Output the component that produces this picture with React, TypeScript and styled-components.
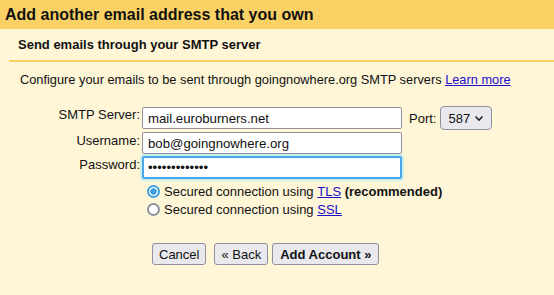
import React from "react";
import styled, { createGlobalStyle } from "styled-components";

const GlobalStyle = createGlobalStyle`
  html, body {
    margin: 0;
    padding: 0;
    background: #fff6d8;
  }
  body {
    font-family: "Liberation Sans", Arial, sans-serif;
    font-size: 13px;
    color: #111;
  }
`;

const Dialog = styled.div`
  width: 554px;
  height: 295px;
  background: #fff6d8;
  overflow: hidden;
`;

const TitleBar = styled.div`
  height: 29px;
  background: #fad165;
  padding-left: 5px;
  font-size: 16px;
  font-weight: bold;
  line-height: 29px;
  color: #111;
`;

const Section = styled.div`
  margin-left: 9px;
  border-bottom: 2px solid #fad165;
  padding: 8px 9px 0;
  height: 23px;
  font-size: 13px;
  font-weight: bold;
  line-height: 15px;
`;

const Intro = styled.p`
  margin: 10px 0 0 20px;
  font-size: 12.8px;
  line-height: 15px;
`;

const Link = styled.a`
  color: #1a0dcc;
  text-decoration: underline;
  cursor: pointer;
`;

const Form = styled.div`
  display: grid;
  grid-template-columns: 122px 260px max-content max-content;
  row-gap: 2px;
  margin: 19px 0 0 20px;
  align-items: center;
`;

const Label = styled.label`
  align-self: start;
  justify-self: end;
  padding: 1px 2px 0 0;
  line-height: 15px;
  white-space: nowrap;
`;

const TextBox = styled.input<{ $focused?: boolean }>`
  box-sizing: border-box;
  width: 260px;
  height: ${(p) => (p.$focused ? "23px" : "22px")};
  margin: 0;
  padding: 0 4px 0 ${(p) => (p.$focused ? "4px" : "5px")};
  font-family: "Liberation Sans", Arial, sans-serif;
  font-size: 13.2px;
  color: #111;
  background: #fff;
  border: ${(p) => (p.$focused ? "2px solid #4aa8e8" : "1px solid #8f8f9d")};
  border-radius: 2px;
  box-shadow: ${(p) => (p.$focused ? "0 0 0 2px #c9f0ec" : "none")};
  outline: none;
`;

const PortLabel = styled.span`
  margin-left: 7px;
  margin-right: 4px;
`;

const SelectWrap = styled.div`
  position: relative;
  width: 52px;
  height: 24px;
`;

const Select = styled.select`
  appearance: none;
  box-sizing: border-box;
  width: 52px;
  height: 24px;
  margin: 0;
  padding: 0 0 0 7px;
  font-family: "Liberation Sans", Arial, sans-serif;
  font-size: 13px;
  color: #111;
  background: #e9e9ed;
  border: 1px solid #8f8f9d;
  border-radius: 4px;
`;

const Chevron = styled.svg`
  position: absolute;
  right: 8px;
  top: 9px;
  pointer-events: none;
`;

const Below = styled.div`
  margin-left: 142px;
`;

const Options = styled.div`
  display: flex;
  flex-direction: column;
  margin-top: 3px;
`;

const OptionRow = styled.label`
  display: flex;
  align-items: center;
  height: 18px;
  white-space: nowrap;
`;

const Radio = styled.input`
  appearance: none;
  box-sizing: border-box;
  width: 13px;
  height: 13px;
  margin: 0 4px 0 5px;
  border-radius: 50%;
  border: 2px solid #8f8f9d;
  background: #fff;

  &:checked {
    border-color: #3d9fe2;
    background: radial-gradient(circle, #3d9fe2 0 3px, #fff 3.5px);
  }
`;

const Buttons = styled.div`
  display: flex;
  gap: 4px;
  margin: 25px 0 0 10px;
`;

const Button = styled.button<{ $primary?: boolean; $spaced?: boolean }>`
  box-sizing: border-box;
  height: 22px;
  margin: 0 ${(p) => (p.$spaced ? "4px" : "0")} 0 0;
  padding: 0 ${(p) => (p.$primary ? "7px" : "6px")};
  font-family: "Liberation Sans", Arial, sans-serif;
  font-size: 13px;
  font-weight: ${(p) => (p.$primary ? "bold" : "normal")};
  color: #111;
  background: #e9e9ed;
  border: 1px solid #8f8f9d;
  border-radius: 3px;
`;

export default function App() {
  return (
    <Dialog>
      <GlobalStyle />
      <TitleBar>Add another email address that you own</TitleBar>
      <Section>Send emails through your SMTP server</Section>
      <Intro>
        Configure your emails to be sent through goingnowhere.org SMTP servers{" "}
        <Link>Learn more</Link>
      </Intro>
      <Form>
        <Label>SMTP Server:</Label>
        <TextBox defaultValue="mail.euroburners.net" />
        <PortLabel>Port:</PortLabel>
        <SelectWrap>
          <Select defaultValue="587">
            <option value="587">587</option>
            <option value="465">465</option>
          </Select>
          <Chevron width="10" height="7" viewBox="0 0 10 7">
            <path d="M1.5 1.5l3.5 3.5 3.5-3.5" fill="none" stroke="#222" strokeWidth="1.6" />
          </Chevron>
        </SelectWrap>

        <Label>Username:</Label>
        <TextBox defaultValue="bob@goingnowhere.org" />
        <span />
        <span />

        <Label>Password:</Label>
        <TextBox $focused type="password" defaultValue="bobspassword1" autoFocus />
        <span />
        <span />
      </Form>

      <Below>
        <Options>
          <OptionRow>
            <Radio type="radio" name="sec" defaultChecked />
            Secured connection using&nbsp;<Link>TLS</Link>&nbsp;<b>(recommended)</b>
          </OptionRow>
          <OptionRow>
            <Radio type="radio" name="sec" />
            Secured connection using&nbsp;<Link>SSL</Link>
          </OptionRow>
        </Options>

        <Buttons>
          <Button $spaced>Cancel</Button>
          <Button>« Back</Button>
          <Button $primary>Add Account »</Button>
        </Buttons>
      </Below>
    </Dialog>
  );
}
